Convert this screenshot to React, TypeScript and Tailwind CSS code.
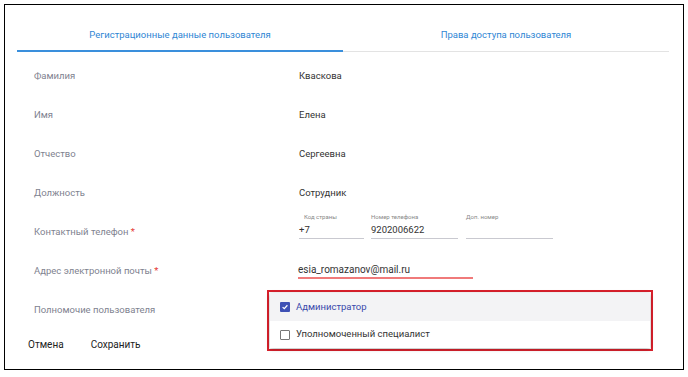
import React from "react";

const font = { fontFamily: "Roboto, 'Noto Sans', Arial, sans-serif" };

function Row({ label, required, children }: { label: string; required?: boolean; children?: React.ReactNode }) {
  return (
    <div className="flex h-[39px] items-center">
      <div className="w-[294px] pl-[29px] text-[9.5px] text-[#80828f]">
        {label}
        {required && <span className="text-[#e53935]"> *</span>}
      </div>
      <div className="flex-1 text-[9.5px] text-[#333]">{children}</div>
    </div>
  );
}

export default function App() {
  return (
    <div className="h-[377px] w-[688px] bg-white pl-[4px] pt-[4px]" style={font}>
      <div className="relative h-[366px] w-[680px] border border-black">
        <div className="ml-[12px] mr-[14px] flex h-[47px] border-b border-[#e3e3e3]">
          <div className="relative flex flex-1 items-end justify-center pb-[9px] text-[9.5px] text-[#2f86d4]">
            Регистрационные данные пользователя
            <div className="absolute bottom-[-1px] left-0 right-0 h-[2px] bg-[#3a8fdc]" />
          </div>
          <div className="flex flex-1 items-end justify-center pb-[9px] text-[9.5px] text-[#2f86d4]">
            Права доступа пользователя
          </div>
        </div>
        <div className="mt-[5px]">
          <Row label="Фамилия">Кваскова</Row>
          <Row label="Имя">Елена</Row>
          <Row label="Отчество">Сергеевна</Row>
          <Row label="Должность">Сотрудник</Row>
          <div className="flex h-[39px] items-center">
            <div className="w-[294px] pl-[29px] text-[9.5px] text-[#80828f]">
              Контактный телефон<span className="text-[#e53935]"> *</span>
            </div>
            <div className="flex gap-[7px] self-start text-[9.5px] text-[#333]">
              <div className="flex w-[65px] flex-col border-b border-[#c9c9d0] pb-[2px]">
                <span className="pl-[5px] text-[6px] leading-[8px] text-[#888]">Код страны</span>
                <span className="mt-[3px] leading-[12px]">+7</span>
              </div>
              <div className="flex w-[87px] flex-col border-b border-[#c9c9d0] pb-[2px]">
                <span className="text-[6px] leading-[8px] text-[#888]">Номер телефона</span>
                <span className="mt-[3px] leading-[12px]">9202006622</span>
              </div>
              <div className="ml-[1px] flex w-[87px] flex-col border-b border-[#c9c9d0] pb-[2px]">
                <span className="text-[6px] leading-[8px] text-[#888]">Доп. номер</span>
                <span className="mt-[3px] leading-[12px]">&nbsp;</span>
              </div>
            </div>
          </div>
          <div className="flex h-[39px] items-center">
            <div className="w-[293px] pl-[29px] text-[9.5px] text-[#80828f]">
              Адрес электронной почты<span className="text-[#e53935]"> *</span>
            </div>
            <div className="-mt-[1px] w-[175px] border-b-2 border-b-[#f07a7a] pb-[1px] text-[10px] leading-[12px] text-[#333]">
              esia_romazanov@mail.ru
            </div>
          </div>
          <Row label="Полномочие пользователя" />
        </div>
        <div className="mt-[7px] flex gap-[27px] pl-[23px] text-[10px] text-[#222]">
          <span>Отмена</span>
          <span>Сохранить</span>
        </div>
        <div className="absolute left-[262px] top-[285px] w-[386px] border-2 border-[#d9202c] p-[1px]">
          <div className="bg-white shadow-[0_1px_4px_rgba(0,0,0,0.3)]">
            <div className="flex h-[28px] items-center gap-[6px] bg-[#f3f3f5] pl-[10px] text-[9.5px] text-[#3949ab]">
              <span className="flex h-[10px] w-[10px] items-center justify-center rounded-[1px] bg-[#3f51b5]">
                <svg viewBox="0 0 10 10" className="h-[8px] w-[8px]">
                  <path d="M2 5.2 L4.1 7.2 L8 2.8" stroke="white" strokeWidth="1.5" fill="none" />
                </svg>
              </span>
              Администратор
            </div>
            <div className="flex h-[27px] items-center gap-[6px] pl-[10px] text-[9.5px] text-[#333]">
              <span className="h-[10px] w-[10px] rounded-[1px] border-[1.5px] border-[#777]" />
              Уполномоченный специалист
            </div>
          </div>
        </div>
      </div>
    </div>
  );
}
